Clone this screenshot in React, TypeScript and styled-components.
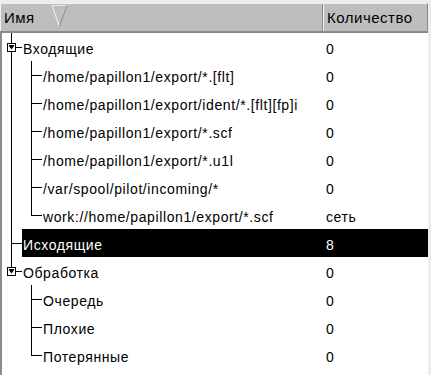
import styled, { createGlobalStyle } from "styled-components";

const GlobalStyle = createGlobalStyle`
    html, body {
        margin: 0;
        padding: 0;
        background: #ececec;
    }

    body {
        font-family: "Liberation Sans", Arial, sans-serif;
        font-size: 14px;
        letter-spacing: 0.6px;
        color: #000;
    }
`;

const Frame = styled.div`
    width: 431px;
    height: 375px;
    padding: 3px 3px 0 0;
    box-sizing: border-box;
    overflow: hidden;
    display: flex;
    flex-direction: column;
`;

const Header = styled.div`
    display: flex;
    height: 30px;
    box-sizing: border-box;
    border-bottom: 2px solid #8a8a8a;
    background: #bebebe;
`;

const HeadCell = styled.div<{ $width: number }>`
    width: ${p => p.$width}px;
    box-sizing: border-box;
    border-top: 1px solid #f2f2f2;
    border-left: 1px solid #f2f2f2;
    border-right: 1px solid #8a8a8a;
    padding-left: 3px;
    font-size: 15px;
    letter-spacing: 0.5px;
    line-height: 27px;
    display: flex;
    align-items: flex-start;
    white-space: nowrap;
    overflow: hidden;
`;

const HeadTitle = styled.span<{ $min?: number }>`
    min-width: ${p => p.$min ?? 0}px;
`;

const SortMark = styled.svg`
    flex: none;
`;

const Body = styled.div`
    flex: 1;
    background: #fff;
    border-left: 2px solid #8c8c8c;
`;

const Row = styled.div`
    display: flex;
    height: 28px;
`;

type GuideKind = "pipe" | "tee" | "elbow" | "blank";

const Guide = styled.div<{ $kind: GuideKind }>`
    position: relative;
    width: 20px;
    flex: none;

    &::before {
        content: "";
        display: ${p => (p.$kind === "blank" ? "none" : "block")};
        position: absolute;
        left: 9px;
        top: 0;
        width: 1px;
        height: ${p => (p.$kind === "elbow" ? "15px" : "100%")};
        background: #000;
    }

    &::after {
        content: "";
        display: ${p => (p.$kind === "tee" || p.$kind === "elbow" ? "block" : "none")};
        position: absolute;
        left: 9px;
        top: 14px;
        width: 11px;
        height: 1px;
        background: #000;
    }
`;

const Expander = styled.svg`
    position: absolute;
    left: 5px;
    top: 10px;
    z-index: 1;
`;

const Content = styled.div<{ $selected: boolean }>`
    flex: 1;
    display: flex;
    background: ${p => (p.$selected ? "#000" : "transparent")};
    color: ${p => (p.$selected ? "#fff" : "#000")};
    padding-top: 4px;
    line-height: 24px;
    box-sizing: border-box;
    min-width: 0;
`;

const Label = styled.div`
    flex: 1;
    padding-left: 1px;
    white-space: nowrap;
    overflow: hidden;
`;

const Count = styled.div`
    width: 102px;
    flex: none;
    padding-left: 4px;
    white-space: nowrap;
`;

type Node = {
    guides: GuideKind[];
    label: string;
    count: string;
    expander?: boolean;
    selected?: boolean;
};

const rows: Node[] = [
    { guides: ["tee"], label: "Входящие", count: "0", expander: true },
    { guides: ["pipe", "tee"], label: "/home/papillon1/export/*.[flt]", count: "0" },
    { guides: ["pipe", "tee"], label: "/home/papillon1/export/ident/*.[flt][fp]i", count: "0" },
    { guides: ["pipe", "tee"], label: "/home/papillon1/export/*.scf", count: "0" },
    { guides: ["pipe", "tee"], label: "/home/papillon1/export/*.u1l", count: "0" },
    { guides: ["pipe", "tee"], label: "/var/spool/pilot/incoming/*", count: "0" },
    { guides: ["pipe", "elbow"], label: "work://home/papillon1/export/*.scf", count: "сеть" },
    { guides: ["tee"], label: "Исходящие", count: "8", selected: true },
    { guides: ["elbow"], label: "Обработка", count: "0", expander: true },
    { guides: ["blank", "tee"], label: "Очередь", count: "0" },
    { guides: ["blank", "tee"], label: "Плохие", count: "0" },
    { guides: ["blank", "elbow"], label: "Потерянные", count: "0" },
];

function ExpandBox() {
    return (
        <Expander width="9" height="9" viewBox="0 0 9 9">
            <rect x="0.5" y="0.5" width="8" height="8" fill="#fff" stroke="#000" />
            <rect x="2" y="2" width="5" height="1" fill="#000" />
            <path d="M2 3 H7 L4.5 6.5 Z" fill="#000" />
        </Expander>
    );
}

export default function App() {
    return (
        <>
            <GlobalStyle />
            <Frame>
                <Header>
                    <HeadCell $width={323}>
                        <HeadTitle $min={46}>Имя</HeadTitle>
                        <SortMark width="18" height="24" viewBox="0 0 18 24">
                            <path d="M2 1.5 L9.5 22.5" stroke="#f4f4f4" strokeWidth="1" fill="none" />
                            <path d="M2 1.5 H17" stroke="#e6e6e6" strokeWidth="1" fill="none" />
                            <path d="M17 1.5 L9.5 22.5" stroke="#8e8e8e" strokeWidth="1" fill="none" />
                        </SortMark>
                    </HeadCell>
                    <HeadCell $width={105}>
                        <HeadTitle>Количество</HeadTitle>
                    </HeadCell>
                </Header>
                <Body>
                    {rows.map((r, i) => (
                        <Row key={i}>
                            {r.guides.map((g, j) => (
                                <Guide key={j} $kind={g}>
                                    {r.expander && j === r.guides.length - 1 && <ExpandBox />}
                                </Guide>
                            ))}
                            <Content $selected={!!r.selected}>
                                <Label>{r.label}</Label>
                                <Count>{r.count}</Count>
                            </Content>
                        </Row>
                    ))}
                </Body>
            </Frame>
        </>
    );
}
